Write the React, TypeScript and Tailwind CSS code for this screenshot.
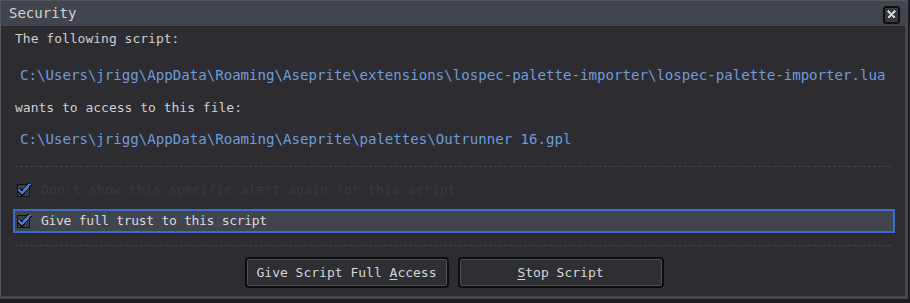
import React from "react";

const mono = { fontFamily: '"DejaVu Sans Mono", "Liberation Mono", monospace' };

function CheckIcon() {
  return (
    <svg width="16" height="16" viewBox="0 0 16 16" shapeRendering="crispEdges">
      <rect x="0" y="2" width="13" height="13" fill="#111114" />
      <rect x="1" y="3" width="11" height="11" fill="#3b3e46" />
      <path d="M2 8 L5 11 L13 2" stroke="#111114" strokeWidth="4.5" fill="none" />
      <path d="M2 8 L5 11 L13 2" stroke="#4a7bd6" strokeWidth="2.5" fill="none" />
    </svg>
  );
}

function Dashes() {
  return <div className="mx-[14px] h-[1px] border-t border-dashed border-[#41444c]" />;
}

export default function App() {
  return (
    <div className="w-[910px] h-[303px] flex flex-col bg-[#1e1e22] overflow-hidden" style={mono}>
      <div className="flex-1 flex flex-col border-l border-t border-[#55585f] border-r-[3px] border-r-[#44474f] border-b-[3px] border-b-[#44474f] mr-[2px] mb-[4px]">
        {/* title bar */}
        <div className="h-[26px] bg-[#41454e] flex items-center justify-between pl-[8px] pr-[5px] border-b border-[#26262a]">
          <span className="text-[14px] text-[#d4d4d4]">Security</span>
          <div className="w-[17px] h-[18px] bg-[#37393f] border-2 border-[#0f0f12] rounded-[3px] flex items-center justify-center mt-[2px]">
            <svg width="11" height="11" viewBox="0 0 11 11" shapeRendering="crispEdges">
              <path d="M2 2 L9 9 M9 2 L2 9" stroke="#d2d2d2" strokeWidth="2" />
            </svg>
          </div>
        </div>

        {/* body */}
        <div className="flex-1 bg-[#2c2c31] flex flex-col">
          <div className="h-[21px] flex items-end pl-[14px] text-[13px] text-[#cfcfcf]">The following script:</div>
          <div className="h-[39px] flex items-end pl-[19px] pb-[1px] text-[14.1px] text-[#6d9ddc] whitespace-nowrap">
            C:\Users\jrigg\AppData\Roaming\Aseprite\extensions\lospec-palette-importer\lospec-palette-importer.lua
          </div>
          <div className="h-[30px] flex items-end pl-[14px] text-[13px] text-[#cfcfcf]">wants to access to this file:</div>
          <div className="h-[33px] flex items-end pl-[19px] text-[14.1px] text-[#6d9ddc] whitespace-nowrap">
            C:\Users\jrigg\AppData\Roaming\Aseprite\palettes\Outrunner 16.gpl
          </div>
          <div className="h-[16px]" />
          <Dashes />
          <div className="h-[42px] flex items-center pl-[16px] gap-[8px] pt-[3px]">
            <CheckIcon />
            <span className="text-[13px] text-[#3a3b41] tracking-[0.15px]">Don't show this specific alert again for this script</span>
          </div>
          <div className="ml-[12px] mr-[10px] h-[24px] bg-[#41454e] border-2 border-[#3a6acb] flex items-center pl-[2px] gap-[8px]">
            <CheckIcon />
            <span className="text-[13px] text-[#dadada] tracking-[-0.3px]">Give full trust to this script</span>
          </div>
          <div className="h-[12px]" />
          <Dashes />
          <div className="flex justify-center gap-[9px] pt-[11px] pl-[2px]">
            <button className="w-[204px] h-[31px] bg-[#2e2f35] border-2 border-[#0d0d10] rounded-[4px] shadow-[inset_0_0_0_1px_#50535b] text-[13px] text-[#d6d6d6]" style={mono}>
              Give Script Full <span className="underline underline-offset-2">A</span>ccess
            </button>
            <button className="w-[206px] h-[31px] bg-[#2e2f35] border-2 border-[#0d0d10] rounded-[4px] shadow-[inset_0_0_0_1px_#50535b] text-[13px] text-[#d6d6d6]" style={mono}>
              <span className="underline underline-offset-2">S</span>top Script
            </button>
          </div>
        </div>
      </div>
    </div>
  );
}
